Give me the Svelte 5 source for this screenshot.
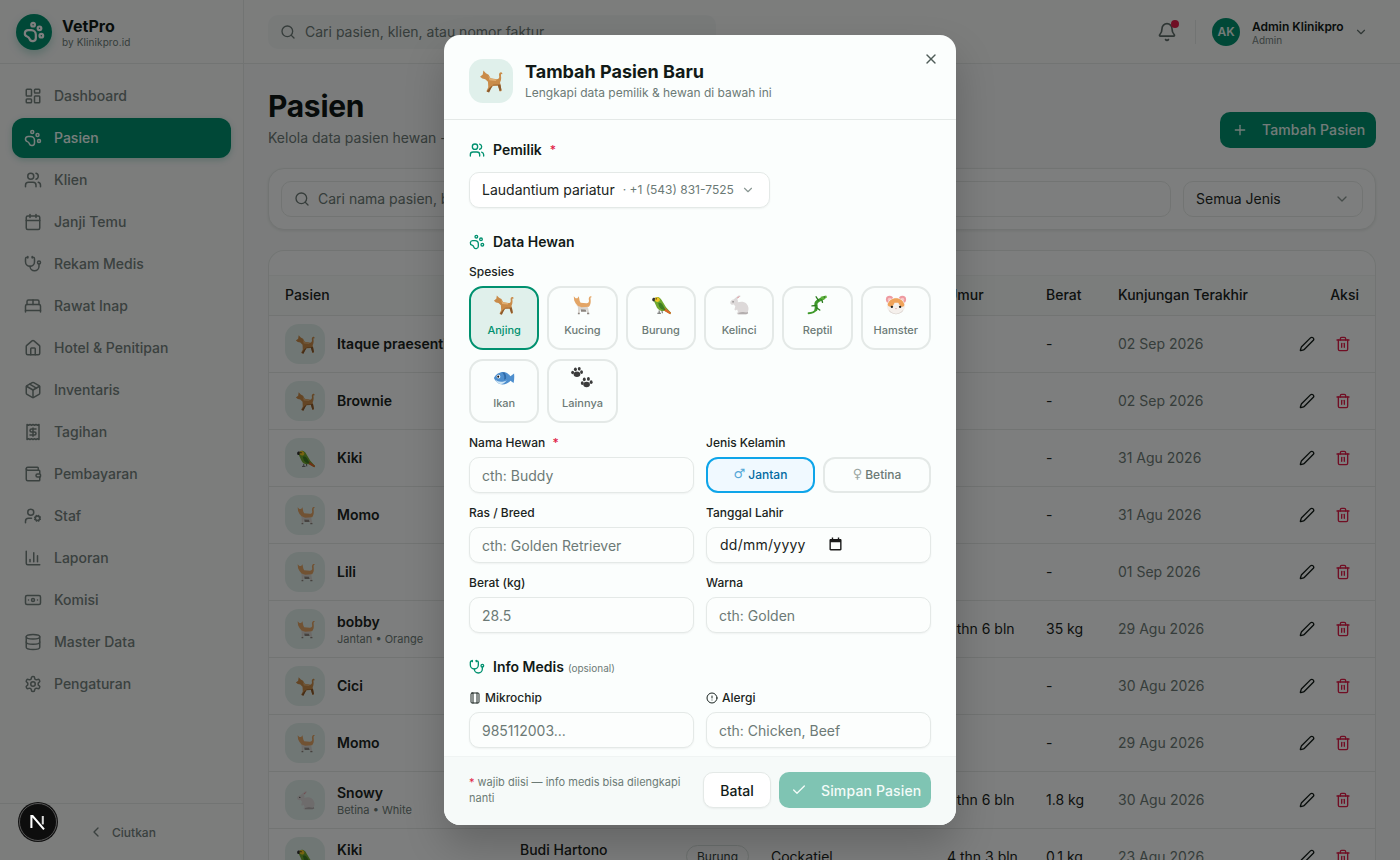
<script>
  const I = {
    dash: '<rect x="3" y="3" width="7" height="9" rx="1"/><rect x="14" y="3" width="7" height="5" rx="1"/><rect x="14" y="12" width="7" height="9" rx="1"/><rect x="3" y="16" width="7" height="5" rx="1"/>',
    paw: '<circle cx="11" cy="4" r="2"/><circle cx="18" cy="8" r="2"/><circle cx="20" cy="16" r="2"/><path d="M9 10a5 5 0 0 1 5 5v3.5a3.5 3.5 0 0 1-6.84 1.045Q6.52 17.48 4.46 16.84A3.5 3.5 0 0 1 5.5 10Z"/>',
    users: '<path d="M16 21v-2a4 4 0 0 0-4-4H6a4 4 0 0 0-4 4v2"/><circle cx="9" cy="7" r="4"/><path d="M22 21v-2a4 4 0 0 0-3-3.87"/><path d="M16 3.13a4 4 0 0 1 0 7.75"/>',
    cal: '<path d="M8 2v4"/><path d="M16 2v4"/><rect x="3" y="4" width="18" height="18" rx="2"/><path d="M3 10h18"/>',
    steth: '<path d="M11 2v2"/><path d="M5 2v2"/><path d="M5 3H4a2 2 0 0 0-2 2v4a6 6 0 0 0 12 0V5a2 2 0 0 0-2-2h-1"/><path d="M8 15a6 6 0 0 0 12 0v-3"/><circle cx="20" cy="10" r="2"/>',
    bed: '<path d="M2 20v-8a2 2 0 0 1 2-2h16a2 2 0 0 1 2 2v8"/><path d="M4 10V6a2 2 0 0 1 2-2h12a2 2 0 0 1 2 2v4"/><path d="M12 4v6"/><path d="M2 18h20"/>',
    home: '<path d="M15 21v-8a1 1 0 0 0-1-1h-4a1 1 0 0 0-1 1v8"/><path d="M3 10a2 2 0 0 1 .709-1.528l7-5.999a2 2 0 0 1 2.582 0l7 5.999A2 2 0 0 1 21 10v9a2 2 0 0 1-2 2H5a2 2 0 0 1-2-2z"/>',
    pkg: '<path d="M11 21.73a2 2 0 0 0 2 0l7-4A2 2 0 0 0 21 16V8a2 2 0 0 0-1-1.73l-7-4a2 2 0 0 0-2 0l-7 4A2 2 0 0 0 3 8v8a2 2 0 0 0 1 1.73z"/><path d="M12 22V12"/><path d="M3.3 7 12 12l8.7-5"/><path d="m7.5 4.27 9 5.15"/>',
    receipt: '<path d="M4 2v20l2-1 2 1 2-1 2 1 2-1 2 1 2-1 2 1V2l-2 1-2-1-2 1-2-1-2 1-2-1-2 1Z"/><path d="M16 8h-6a2 2 0 1 0 0 4h4a2 2 0 1 1 0 4H8"/><path d="M12 17.5v-11"/>',
    wallet: '<path d="M19 7V4a1 1 0 0 0-1-1H5a2 2 0 0 0 0 4h15a1 1 0 0 1 1 1v4h-3a2 2 0 0 0 0 4h3a1 1 0 0 0 1-1v-2a1 1 0 0 0-1-1"/><path d="M3 5v14a2 2 0 0 0 2 2h15a1 1 0 0 0 1-1v-4"/>',
    cog: '<circle cx="18" cy="15" r="3"/><circle cx="9" cy="7" r="4"/><path d="M10 15H6a4 4 0 0 0-4 4v2"/><path d="m21.7 16.4-.9-.3"/><path d="m15.2 13.9-.9-.3"/><path d="m16.6 18.7.3-.9"/><path d="m19.1 12.2.3-.9"/><path d="m19.6 18.7-.4-1"/><path d="m16.8 12.3-.4-1"/><path d="m14.3 16.6 1-.4"/><path d="m20.7 13.8 1-.4"/>',
    chart: '<path d="M3 3v16a2 2 0 0 0 2 2h16"/><path d="M18 17V9"/><path d="M13 17V5"/><path d="M8 17v-3"/>',
    note: '<rect x="2" y="6" width="20" height="12" rx="2"/><circle cx="12" cy="12" r="2"/><path d="M6 12h.01M18 12h.01"/>',
    db: '<ellipse cx="12" cy="5" rx="9" ry="3"/><path d="M3 5V19A9 3 0 0 0 21 19V5"/><path d="M3 12A9 3 0 0 0 21 12"/>',
    gear: '<path d="M12.22 2h-.44a2 2 0 0 0-2 2v.18a2 2 0 0 1-1 1.73l-.43.25a2 2 0 0 1-2 0l-.15-.08a2 2 0 0 0-2.73.73l-.22.38a2 2 0 0 0 .73 2.73l.15.1a2 2 0 0 1 1 1.72v.51a2 2 0 0 1-1 1.74l-.15.09a2 2 0 0 0-.73 2.73l.22.38a2 2 0 0 0 2.73.73l.15-.08a2 2 0 0 1 2 0l.43.25a2 2 0 0 1 1 1.73V20a2 2 0 0 0 2 2h.44a2 2 0 0 0 2-2v-.18a2 2 0 0 1 1-1.73l.43-.25a2 2 0 0 1 2 0l.15.08a2 2 0 0 0 2.73-.73l.22-.39a2 2 0 0 0-.73-2.73l-.15-.08a2 2 0 0 1-1-1.74v-.5a2 2 0 0 1 1-1.74l.15-.09a2 2 0 0 0 .73-2.73l-.22-.38a2 2 0 0 0-2.73-.73l-.15.08a2 2 0 0 1-2 0l-.43-.25a2 2 0 0 1-1-1.73V4a2 2 0 0 0-2-2z"/><circle cx="12" cy="12" r="3"/>',
    bell: '<path d="M10.268 21a2 2 0 0 0 3.464 0"/><path d="M3.262 15.326A1 1 0 0 0 4 17h16a1 1 0 0 0 .74-1.673C19.41 13.956 18 12.499 18 8A6 6 0 0 0 6 8c0 4.499-1.411 5.956-2.738 7.326"/>',
    search: '<path d="m21 21-4.34-4.34"/><circle cx="11" cy="11" r="8"/>',
    down: '<path d="m6 9 6 6 6-6"/>',
    left: '<path d="m15 18-6-6 6-6"/>',
    plus: '<path d="M5 12h14"/><path d="M12 5v14"/>',
    x: '<path d="M18 6 6 18"/><path d="m6 6 12 12"/>',
    check: '<path d="M20 6 9 17l-5-5"/>',
    pen: '<path d="M21.174 6.812a1 1 0 0 0-3.986-3.987L3.842 16.174a2 2 0 0 0-.5.83l-1.321 4.352a.5.5 0 0 0 .623.622l4.353-1.32a2 2 0 0 0 .83-.497z"/>',
    trash: '<path d="M3 6h18"/><path d="M19 6v14c0 1-1 2-2 2H7c-1 0-2-1-2-2V6"/><path d="M8 6V4c0-1 1-2 2-2h4c1 0 2 1 2 2v2"/><path d="M10 11v6"/><path d="M14 11v6"/>',
    chip: '<rect x="4" y="2" width="16" height="20" rx="2"/><path d="M8 2v20M16 2v20"/>',
    alert: '<circle cx="12" cy="12" r="10"/><path d="M12 8v4"/><path d="M12 16h.01"/>'
  };

  const E = {
    dog: { label: '🐕', art: '<path fill="#c98b49" d="M4.2 1.5 6.6 4l2.6 1.4 1.9 3.5 6 1c1.4.1 2.3-1 2.3-2.4 0-1.2-.6-2.3.3-3.6 1.2-1.3 3-.6 2.7 1.2-.9-.5-1.4 0-1.3 1.3.4 2.6.1 4.6-.9 6.4l1.5 8.2-1.8.6-1.7-5.6-4.8.2-2.7 3.5-1.3 2.6-2.3-.9 1.8-3.8-.3-5.4L6 9.8l-2.8-.6L1 7.4l2.6-2.1z"/><path fill="#8c5a2c" d="m13 15.7 5.1-.2 1.7 5.6 1.8-.6-1-5.7-7 .3-3.4 3-2.8 3.6 2.3.8 1.3-2.6z"/><path fill="#e0ae72" d="M9 6.5 11 9l6 1-1 1.5-6-.7z"/>' },
    cat: { label: '🐈', art: '<path fill="#d9d5d0" d="M4.5 9.5c1 2 2 3.5 3 4.5l.3 7.5h1.500l.7-5 6.5.5 1.500 4.500h1.800l-1-6-1.300-2.500-7 1-4-1.500z"/><path fill="#8c857f" d="M10.500 16.500 16 16.800l.8 2.500h-5.800zM7.500 20.500h2v1.500h-2zM17.500 20.500h2.400v1.500h-2.400z"/><path fill="#e3a566" d="M3 2.500 5 4.500h2l1.500-2 1 5 1 2 6.500.5c1.800 0 2.800-1 2.600-2.800-.2-1.500-.6-3 .6-4.300.8-.9 2.300-.7 2.400.6-1-.2-1.500.4-1.300 1.800.4 3 .3 5.300-.8 7.200l-1 1.500-8 .5-4-1.500-2.500-3-1.500-3z"/>' },
    bird: { label: '🦜', art: '<path fill="#6fa82f" d="M4 7c.5-3 3-4.500 5.500-3.500 2 .8 3 2.500 4 4.500l4 6.500 5.500 6-1 1.500-6-3.500-3.500 0c-3-.5-5-3-6-6z"/><path fill="#f3c623" d="M4.500 5.500C6 3 8.500 3 10 4.500c1 1 1 3-.5 3.800-1.800.9-3.700.2-5-2.800z"/><path fill="#e0622a" d="m16 15 7 5.500-1 1.500-6-3.500-1-3z"/><path fill="#3f7d22" d="M9 10c2-1 4 0 5.500 3l2.500 4.500c-3 .3-5.500-1-7-3.500z"/><path fill="#333" d="M2.500 5.500C3 4 4.500 3.700 5.500 4.500L5 8C3.500 8.500 2 7.500 2.500 5.500z"/><circle cx="6.800" cy="5.300" r=".8" fill="#222"/><path fill="none" stroke="#555" stroke-width="1" d="M10 18v3m-2 0h4m1-3 .5 3"/>' },
    rab: { label: '🐇', art: '<path fill="#ddd9d9" d="M2.500 9.500c0-2 1.500-3.500 3.500-3.500L11 2c1-.8 2.800-.6 3 .4-.8.200-2.500 1.600-4 3.100.8 1 1 2.300.7 3.500 3-1 7-1 9.500 1.500 2.500 2.600 2.800 6.500 1.300 9L22 21l-2 1H10l-.5-1.500L11 20l-1-3-2 1-1-1 1-3.500-1.500-2C4.500 12 2.500 11.500 2.500 9.500z"/><path fill="#e49aa0" d="M10 4c.8-.8 2-1.500 3-1.500-.8.800-1.700 1.800-2.500 2.500z"/><path fill="#b3aeae" d="M14 20c2-.5 4-.5 6 .3l1.300-1 .7 1.700-2 1H11l.5-1.500z"/><circle cx="5.500" cy="8.500" r=".7" fill="#444"/>' },
    liz: { label: '🦎', art: '<path fill="none" stroke="#3f9a2b" stroke-width="3.400" stroke-linecap="round" d="M19 4.500 14 7c-2 1-3.500 2-3.200 4.500.2 2 1 3.500 0 5.500"/><path fill="none" stroke="#3f9a2b" stroke-width="2" stroke-linecap="round" d="M10.800 17c-1.200 2.400-4 3.700-8 4"/><path fill="none" stroke="#2d7c20" stroke-width="1.500" stroke-linecap="round" d="M13.500 7 11 3m6 2.500 1 3.500M11 12.500l-4.500.5M11.500 15l3.500 2.500"/><path fill="#5db33a" d="m16 3 6-1.500 1 2-4 3-3-1z"/><circle cx="20" cy="3.300" r=".6" fill="#123"/>' },
    ham: { label: '🐹', art: '<circle cx="5" cy="6" r="4" fill="#ee9aa0"/><circle cx="19" cy="6" r="4" fill="#ee9aa0"/><circle cx="5" cy="6" r="2" fill="#f9c6c6"/><circle cx="19" cy="6" r="2" fill="#f9c6c6"/><ellipse cx="12" cy="13" rx="10" ry="9" fill="#f5f0ec"/><path fill="#f0a35a" d="M3 11c1-4 5-6.500 9-6.500S20 7 21 11c.3 1.500-.5 3-2 3-2 0-3.500-2-4.500-4.500h-4C9.500 12 8 14 6 14c-2 0-3.300-1.500-3-3z"/><circle cx="7.500" cy="14" r="1.300" fill="#222"/><circle cx="16.500" cy="14" r="1.300" fill="#222"/><path fill="#d98a8a" d="M11 15.500h2l-1 1.200z"/><path fill="#d8d2cd" d="M4 17c2 3 5 4.500 8 4.500s6-1.500 8-4.500c-.5 3-4 5-8 5s-7.500-2-8-5z"/>' },
    fish: { label: '🐟', art: '<path fill="#4e8fce" d="M1 12c2-4 6-6.500 10-6.500 3.500 0 6 2 8 4.500l4-3c.3 3 .3 7-.5 10.500L19 15c-2 2.500-5 4-8.500 4C6.500 19 3 16.500 1 12z"/><path fill="#cfe6f5" d="M2.500 14c3 2.500 8 3 12.500.5-2 3-4.500 4.500-7 4-2.500-.3-4.500-2.300-5.500-4.500z"/><path fill="#2f6aa8" d="M10 6c2 2 3 5 2 8l2-1c1-2 0-5-1.500-7z"/><circle cx="6" cy="10.500" r="2" fill="#fff"/><circle cx="5.700" cy="10.500" r="1.100" fill="#111"/>' },
    paws: { label: '🐾', art: '<g fill="#3b3b3b"><ellipse cx="6.500" cy="8" rx="3.600" ry="3"/><ellipse cx="1.800" cy="6" rx="1.600" ry="2"/><ellipse cx="4.800" cy="2.500" rx="1.600" ry="2"/><ellipse cx="9" cy="2" rx="1.600" ry="2"/><ellipse cx="11.500" cy="5.500" rx="1.600" ry="2"/><ellipse cx="17" cy="19" rx="3.600" ry="3"/><ellipse cx="12.300" cy="17.500" rx="1.600" ry="2"/><ellipse cx="14.500" cy="13.500" rx="1.600" ry="2"/><ellipse cx="19" cy="13" rx="1.600" ry="2"/><ellipse cx="22" cy="16.500" rx="1.600" ry="2"/></g>' }
  };

  const nav = [
    ['dash', 'Dashboard'], ['paw', 'Pasien'], ['users', 'Klien'], ['cal', 'Janji Temu'],
    ['steth', 'Rekam Medis'], ['bed', 'Rawat Inap'], ['home', 'Hotel & Penitipan'], ['pkg', 'Inventaris'],
    ['receipt', 'Tagihan'], ['wallet', 'Pembayaran'], ['cog', 'Staf'], ['chart', 'Laporan'],
    ['note', 'Komisi'], ['db', 'Master Data'], ['gear', 'Pengaturan']
  ];

  const rows = [
    { e: 'dog', n: 'Itaque praesentium', s: '', k: 'Laudantium pariatur', j: 'Anjing', r: '-', u: '', b: '-', v: '02 Sep 2026' },
    { e: 'dog', n: 'Brownie', s: '', k: 'Budi Hartono', j: 'Anjing', r: '-', u: '', b: '-', v: '02 Sep 2026' },
    { e: 'bird', n: 'Kiki', s: '', k: 'Budi Hartono', j: 'Burung', r: '-', u: '', b: '-', v: '31 Agu 2026' },
    { e: 'cat', n: 'Momo', s: '', k: 'Budi Hartono', j: 'Kucing', r: '-', u: '', b: '-', v: '31 Agu 2026' },
    { e: 'cat', n: 'Lili', s: '', k: 'Budi Hartono', j: 'Kucing', r: '-', u: '', b: '-', v: '01 Sep 2026' },
    { e: 'cat', n: 'bobby', s: 'Jantan • Orange', k: 'Budi Hartono', j: 'Kucing', r: 'Persia', u: '1 thn 6 bln', b: '35 kg', v: '29 Agu 2026' },
    { e: 'dog', n: 'Cici', s: '', k: 'Budi Hartono', j: 'Anjing', r: '-', u: '', b: '-', v: '30 Agu 2026' },
    { e: 'cat', n: 'Momo', s: '', k: 'Budi Hartono', j: 'Kucing', r: '-', u: '', b: '-', v: '29 Agu 2026' },
    { e: 'rab', n: 'Snowy', s: 'Betina • White', k: 'Budi Hartono', j: 'Kelinci', r: 'Anggora', u: '1 thn 6 bln', b: '1.8 kg', v: '30 Agu 2026' },
    { e: 'bird', n: 'Kiki', s: 'Jantan • Hijau', k: 'Budi Hartono', j: 'Burung', r: 'Cockatiel', u: '4 thn 3 bln', b: '0.1 kg', v: '23 Agu 2026' }
  ];

  const species = [
    ['dog', 'Anjing'], ['cat', 'Kucing'], ['bird', 'Burung'], ['rab', 'Kelinci'],
    ['liz', 'Reptil'], ['ham', 'Hamster'], ['fish', 'Ikan'], ['paws', 'Lainnya']
  ];
</script>

{#snippet icon(name, size, sw = 2)}
  <svg class="ic" width={size} height={size} viewBox="0 0 24 24" fill="none" stroke="currentColor" stroke-width={sw} stroke-linecap="round" stroke-linejoin="round">{@html I[name]}</svg>
{/snippet}

{#snippet emoji(name, size)}
  <svg class="ic" role="img" aria-label={E[name].label} width={size} height={size} viewBox="0 0 24 24">{@html E[name].art}</svg>
{/snippet}

<div class="app">
  <aside class="side">
    <div class="brand">
      <div class="logo">{@render icon('paw', 22, 2.4)}</div>
      <div>
        <div class="bname">VetPro</div>
        <div class="bsub">by Klinikpro.id</div>
      </div>
    </div>
    <nav class="nav">
      {#each nav as [ic, label], i}
        <div class="nitem" class:on={i === 1}>{@render icon(ic, 18)}<span>{label}</span></div>
      {/each}
    </nav>
    <div class="collapse">{@render icon('left', 16)}<span>Ciutkan</span></div>
  </aside>

  <div class="main">
    <header class="top">
      <div class="tsearch">{@render icon('search', 16)}<span>Cari pasien, klien, atau nomor faktur...</span></div>
      <div class="tright">
        <div class="bell">{@render icon('bell', 20)}<i></i></div>
        <div class="vsep"></div>
        <div class="av">AK</div>
        <div class="who"><b>Admin Klinikpro</b><small>Admin</small></div>
        <span class="chev">{@render icon('down', 14)}</span>
      </div>
    </header>

    <main class="content">
      <div class="phead">
        <div>
          <h1>Pasien</h1>
          <p>Kelola data pasien hewan - semua pasien klinik Anda</p>
        </div>
        <button class="add">{@render icon('plus', 16)}<span>Tambah Pasien</span></button>
      </div>

      <div class="filter">
        <div class="fsearch">{@render icon('search', 16)}<span>Cari nama pasien, breed, atau pemilik...</span></div>
        <div class="fsel"><span>Semua Jenis</span>{@render icon('down', 16)}</div>
      </div>

      <div class="tcard">
        <table>
          <colgroup>
            <col class="c1" /><col class="c2" /><col class="c3" /><col class="c4" />
            <col class="c5" /><col class="c6" /><col class="c7" /><col />
          </colgroup>
          <thead>
            <tr><th>Pasien</th><th>Klien</th><th>Jenis</th><th>Ras</th><th>Umur</th><th>Berat</th><th>Kunjungan Terakhir</th><th class="ra">Aksi</th></tr>
          </thead>
          <tbody>
            {#each rows as r}
              <tr>
                <td class="nb">
                  <div class="pcell">
                    <div class="pav">{@render emoji(r.e, 21)}</div>
                    <div class="pname" class:sub={r.s}><b>{r.n}</b>{#if r.s}<small>{r.s}</small>{/if}</div>
                  </div>
                </td>
                <td class="nb"><div class="kl"><b>{r.k}</b><small>+62 812 0000 000</small></div></td>
                <td><span class="pill">{r.j}</span></td>
                <td>{r.r}</td>
                <td>{r.u}</td>
                <td>{r.b}</td>
                <td class="date">{r.v}</td>
                <td class="nb">
                  <div class="acts">
                    <span class="pen">{@render icon('pen', 16)}</span>
                    <span class="del">{@render icon('trash', 16)}</span>
                  </div>
                </td>
              </tr>
            {/each}
          </tbody>
        </table>
      </div>
    </main>
  </div>

  <div class="overlay">
    <section class="modal">
      <div class="mhead">
        <div class="micon">{@render emoji('dog', 25)}</div>
        <div class="mtitle">
          <h2>Tambah Pasien Baru</h2>
          <p>Lengkapi data pemilik &amp; hewan di bawah ini</p>
        </div>
        <span class="mclose">{@render icon('x', 16)}</span>
      </div>

      <div class="mbody">
        <div class="sec sec-first">{@render icon('users', 16)}<span>Pemilik</span><em>*</em></div>
        <div class="owner">
          <span class="oname">Laudantium pariatur</span>
          <span class="ophone">· +1 (543) 831-7525</span>
          {@render icon('down', 14)}
        </div>

        <div class="sec sec-hewan">{@render icon('paw', 16)}<span>Data Hewan</span></div>
        <div class="lab">Spesies</div>
        <div class="spgrid">
          {#each species as [e, l], i}
            <div class="sp" class:sel={i === 0}><span class="spe">{@render emoji(e, 22)}</span><span class="spl">{l}</span></div>
          {/each}
        </div>

        <div class="fgrid">
          <div>
            <div class="lab">Nama Hewan <em>*</em></div>
            <div class="inp ph">cth: Buddy</div>
          </div>
          <div>
            <div class="lab">Jenis Kelamin</div>
            <div class="gender">
              <div class="g gsel"><span class="gi gi1">♂</span>Jantan</div>
              <div class="g"><span class="gi gi2">♀</span>Betina</div>
            </div>
          </div>
          <div>
            <div class="lab">Ras / Breed</div>
            <div class="inp ph">cth: Golden Retriever</div>
          </div>
          <div>
            <div class="lab">Tanggal Lahir</div>
            <div class="inp dt">
              <span>dd/mm/yyyy</span>
              <svg width="13" height="14" viewBox="0 0 14 14"><path fill="#1a1a1a" d="M3 0h1.5v1.5h5V0H11v1.5h1.2c.7 0 1.3.6 1.3 1.3v9.900c0 .7-.6 1.300-1.300 1.300H1.800c-.7 0-1.300-.6-1.300-1.300V2.800c0-.7.6-1.300 1.300-1.300H3zM2 5v7.500h10V5z"/></svg>
            </div>
          </div>
          <div>
            <div class="lab">Berat (kg)</div>
            <div class="inp ph">28.5</div>
          </div>
          <div>
            <div class="lab">Warna</div>
            <div class="inp ph">cth: Golden</div>
          </div>
        </div>

        <div class="sec sec-medis">{@render icon('steth', 16)}<span>Info Medis</span><small>(opsional)</small></div>
        <div class="fgrid">
          <div>
            <div class="lab ilab">{@render icon('chip', 12)}Mikrochip</div>
            <div class="inp ph">985112003...</div>
          </div>
          <div>
            <div class="lab ilab">{@render icon('alert', 12)}Alergi</div>
            <div class="inp ph">cth: Chicken, Beef</div>
          </div>
        </div>
      </div>

      <div class="mfoot">
        <div class="fnote"><em>*</em> wajib diisi — info medis bisa dilengkapi nanti</div>
        <button class="cancel">Batal</button>
        <button class="save">{@render icon('check', 16)}<span>Simpan Pasien</span></button>
      </div>
    </section>
  </div>

  <div class="nextdev">
    <svg width="24" height="24" viewBox="0 0 20 20" fill="none">
      <path d="M4.5 15V5h1L15 16.200" stroke="#fff" stroke-width="1.700"/>
      <path d="M14 5v7" stroke="#d8d8d8" stroke-width="1.700"/>
    </svg>
  </div>
</div>

<style>
  :global(body) { margin: 0; background: #f6f9f8; }
  :global(*) { box-sizing: border-box; }
  .app {
    position: relative; display: flex; height: 860px; overflow: hidden;
    font-family: Inter, sans-serif; font-size: 14px; color: #111a17;
  }
  .ic { flex: none; display: block; }

  .side { width: 244px; flex: none; display: flex; flex-direction: column; border-right: 1px solid #e4e9e7; background: #f8faf9; }
  .brand { height: 64px; flex: none; display: flex; align-items: center; gap: 10px; padding: 0 16px; border-bottom: 1px solid #e4e9e7; }
  .logo { width: 36px; height: 36px; border-radius: 18px; background: #00916f; color: #fff; display: flex; align-items: center; justify-content: center; box-shadow: 0 4px 8px rgba(0,145,111,.25); }
  .bname { font-size: 16px; font-weight: 700; line-height: 20px; color: #111a17; }
  .bsub { font-size: 10px; line-height: 12px; letter-spacing: .1px; color: #6c7a76; font-weight: 400; }
  .nav { flex: 1; padding: 12px 12px 0; display: flex; flex-direction: column; gap: 2px; }
  .nitem { height: 40px; display: flex; align-items: center; gap: 12px; padding-left: 12px; border-radius: 12px; color: #75827e; font-weight: 500; font-size: 14px; }
  .nitem span { margin-bottom: 2px; }
  .nitem.on { background: #00916f; color: #f0fdf9; box-shadow: 0 2px 6px rgba(0,145,111,.25); width: 219px; }
  .collapse { height: 57px; flex: none; border-top: 1px solid #e4e9e7; display: flex; align-items: center; padding-left: 88px; gap: 8px; font-size: 12px; color: #75827e; font-weight: 500; }

  .main { flex: 1; min-width: 0; display: flex; flex-direction: column; }
  .top { height: 64px; flex: none; display: flex; align-items: center; justify-content: space-between; padding: 0 24px; border-bottom: 1px solid #e4e9e7; background: #f8faf9; }
  .tsearch { width: 448px; height: 34px; border-radius: 10px; background: #f0f4f3; display: flex; align-items: center; gap: 9px; padding-left: 12px; color: #6c7a76; }
  .tright { display: flex; align-items: center; }
  .bell { position: relative; color: #5f6d69; margin-right: 18px; }
  .bell i { position: absolute; top: -2px; right: -2px; width: 8px; height: 8px; border-radius: 50%; background: #e11d48; }
  .vsep { width: 1px; height: 24px; background: #e4e9e7; margin-right: 16px; }
  .av { width: 28px; height: 28px; border-radius: 50%; background: #00916f; color: #e6f7f2; font-size: 12px; font-weight: 600; display: flex; align-items: center; justify-content: center; margin-right: 12px; }
  .who { display: flex; flex-direction: column; width: 102px; padding-top: 2px; }
  .who b { font-size: 12px; line-height: 15px; font-weight: 600; color: #111a17; white-space: nowrap; }
  .who small { font-size: 10px; line-height: 12px; color: #75827e; }
  .chev { color: #5f6d69; margin-right: 8px; }

  .content { padding: 24px; flex: 1; display: flex; flex-direction: column; gap: 20px; min-height: 0; }
  .phead { display: flex; justify-content: space-between; align-items: flex-end; }
  h1 { margin: 0; font-size: 30px; line-height: 36px; font-weight: 700; letter-spacing: -.3px; color: #0f1714; }
  .phead p { margin: 4px 0 0; font-size: 14px; line-height: 20px; color: #6c7a76; }
  .add { width: 156px; height: 36px; border: 0; border-radius: 10px; background: #00916f; color: #e6f7f2; display: flex; align-items: center; gap: 14px; padding: 0 12px 1px; font: 500 14px Inter, sans-serif; letter-spacing: .1px; white-space: nowrap; }

  .filter { height: 62px; flex: none; display: flex; gap: 12px; padding: 12px; border: 1px solid #e4e9e7; border-radius: 16px; background: #fbfdfc; box-shadow: 0 1px 3px rgba(0,0,0,.08); }
  .fsearch { flex: 1; display: flex; align-items: center; gap: 8px; padding: 0 0 1px 12px; border: 1px solid #e4e9e7; border-radius: 10px; color: #6c7a76; }
  .fsel { width: 180px; flex: none; display: flex; align-items: center; justify-content: space-between; padding: 0 12px 1px; border: 1px solid #e4e9e7; border-radius: 10px; color: #1f2a27; }
  .fsel .ic { color: #8b9894; }

  .tcard { flex: none; padding-top: 24px; border: 1px solid #e4e9e7; border-bottom: 0; border-radius: 16px 16px 0 0; background: #fbfdfc; width: 1108px; }
  table { width: 1106px; table-layout: fixed; border-collapse: separate; border-spacing: 0; font-size: 14px; }
  .c1 { width: 235px; } .c2 { width: 166px; } .c3 { width: 85px; } .c4 { width: 176px; }
  .c5 { width: 99px; } .c6 { width: 72px; } .c7 { width: 188px; }
  th { height: 41px; text-align: left; font-weight: 500; padding: 0 0 2px 16px; background: #f7faf9; border-top: 1px solid #eef2f0; border-bottom: 1px solid #e4e9e7; color: #1a2421; white-space: nowrap; }
  th.ra { text-align: right; padding: 0 16px 2px 0; }
  td { height: 57px; padding: 0 0 2px 16px; border-bottom: 1px solid #e4e9e7; color: #1a2421; white-space: nowrap; }
  td.nb { padding-bottom: 0; }
  td.date { color: #6c7a76; }
  .pcell { display: flex; align-items: center; gap: 12px; }
  .pav { width: 40px; height: 40px; flex: none; border-radius: 14px; background: #e0efeb; display: flex; align-items: center; justify-content: center; }
  .pname, .kl { display: flex; flex-direction: column; }
  .pname { margin-bottom: 2px; }
  .pname.sub { margin-bottom: 0; }
  .pname b, .kl b { font-weight: 600; font-size: 14px; line-height: 17px; }
  .kl b { font-weight: 500; }
  .pname small, .kl small { font-size: 11px; line-height: 14px; margin-top: 2px; color: #6c7a76; }
  .pill { display: inline-block; padding: 2px 10px; border: 1px solid #d9e1de; border-radius: 12px; font-size: 12px; line-height: 17px; color: #33413d; }
  .acts { display: flex; justify-content: flex-end; align-items: center; gap: 20px; padding-right: 24px; }
  .pen { color: #111a17; }
  .del { color: #e11d48; }

  .overlay { position: absolute; inset: 0; background: rgba(0,0,0,.5); display: flex; align-items: center; justify-content: center; z-index: 10; }
  .modal { width: 512px; height: 790px; border-radius: 16px; background: #fbfefd; display: flex; flex-direction: column; overflow: hidden; box-shadow: 0 20px 40px rgba(0,0,0,.2); }
  .mhead { position: relative; flex: none; height: 85px; display: flex; align-items: flex-start; gap: 12px; padding: 24px 24px 0 25px; border-bottom: 1px solid #e4e9e7; }
  .micon { width: 44px; height: 44px; flex: none; border-radius: 14px; background: #e0f0eb; display: flex; align-items: center; justify-content: center; }
  .mtitle { padding-top: 1px; }
  h2 { margin: 0; font-size: 18px; line-height: 24px; font-weight: 700; color: #111a17; }
  .mtitle p { margin: 1px 0 0; font-size: 12px; line-height: 16px; color: #6c7a76; }
  .mclose { position: absolute; top: 16px; right: 17px; color: #4f5c58; }
  .mbody { flex: 1; min-height: 0; overflow: hidden; padding: 19px 25px 0 25px; }
  .sec { display: flex; align-items: center; gap: 8px; height: 21px; margin-bottom: 12px; font-size: 14px; font-weight: 600; color: #111a17; }
  .sec .ic { color: #00916f; }
  .sec em { font-style: normal; color: #e11d48; font-size: 12px; font-weight: 500; }
  .sec small { font-size: 10px; font-weight: 400; color: #6c7a76; margin-left: -4px; padding-top: 2px; }
  .sec-hewan { margin-top: 23px; }
  .sec-medis { margin-top: 23px; margin-bottom: 13px; }
  .owner { width: 301px; height: 36px; display: flex; align-items: center; padding: 0 12px 1px; border: 1px solid #e4e9e7; border-radius: 10px; background: #fff; box-shadow: 0 1px 2px rgba(0,0,0,.05); }
  .oname { font-size: 14px; color: #1a2421; white-space: nowrap; }
  .ophone { font-size: 12px; color: #6c7a76; margin-left: 8px; white-space: nowrap; }
  .owner .ic { color: #8b9894; margin-left: auto; margin-right: 2px; }
  .lab { font-size: 12px; line-height: 16px; font-weight: 500; color: #1a2421; margin-bottom: 6px; }
  .lab em { font-style: normal; color: #e11d48; margin-left: 4px; }
  .ilab { display: flex; align-items: center; gap: 4px; }
  .spgrid { display: grid; grid-template-columns: repeat(6, 1fr); column-gap: 8px; row-gap: 9px; margin-bottom: 12px; width: 462px; }
  .sp { height: 64px; border: 2px solid #e4e9e7; border-radius: 14px; display: flex; flex-direction: column; align-items: center; padding-top: 6px; }
  .sp.sel { border-color: #00916f; background: #e0f0eb; }
  .spe { height: 26px; display: block; }
  .spl { font-size: 11px; line-height: 16px; font-weight: 500; color: #6c7a76; margin-top: 2px; }
  .sp.sel .spl { color: #00916f; }
  .fgrid { display: grid; grid-template-columns: 225px 225px; column-gap: 12px; row-gap: 12px; width: 462px; }
  .inp { height: 36px; display: flex; align-items: center; padding: 0 12px; border: 1px solid #e4e9e7; border-radius: 10px; background: #fcfefd; box-shadow: 0 1px 2px rgba(0,0,0,.05); font-size: 14px; }
  .ph { color: #6c7a76; }
  .dt { color: #1a2421; padding-left: 13px; letter-spacing: .25px; padding-bottom: 2px; }
  .dt svg { margin-left: 23px; }
  .gender { display: grid; grid-template-columns: 109px 108px; gap: 8px; }
  .g { height: 36px; display: flex; align-items: center; justify-content: center; gap: 3px; padding-bottom: 2px; border: 2px solid #e4e9e7; border-radius: 12px; font-size: 12px; font-weight: 500; color: #6c7a76; }
  .gi { font-family: "DejaVu Sans", sans-serif; font-size: 13px; font-weight: 400; line-height: 16px; }
  .gi2 { color: #9aa6a2; }
  .gi1 { color: #56a8d8; }
  .gsel { border-color: #0ea5e9; background: #f0f9ff; color: #0369a1; }
  .mfoot { flex: none; height: 69px; display: flex; align-items: center; gap: 8px; padding: 0 25px 2px; background: #f6faf9; border-top: 1px solid #f0f4f3; }
  .fnote { flex: 1; font-size: 11px; line-height: 16px; color: #6c7a76; padding-right: 10px; }
  .fnote em { font-style: normal; color: #e11d48; }
  .cancel { width: 68px; height: 36px; border: 1px solid #e4e9e7; border-radius: 10px; background: #fff; font: 500 14px Inter, sans-serif; color: #111a17; box-shadow: 0 1px 2px rgba(0,0,0,.05); }
  .save { width: 152px; height: 36px; border: 0; border-radius: 10px; background: #7fc4b3; color: #f3fbf8; display: flex; align-items: center; gap: 14px; padding: 0 12px; font: 500 14px Inter, sans-serif; letter-spacing: .15px; white-space: nowrap; }

  .nextdev { position: absolute; left: 19px; top: 803px; width: 38px; height: 38px; border-radius: 50%; background: #0d0d0d; border: 1px solid #555; box-shadow: 0 0 0 1px #111; display: flex; align-items: center; justify-content: center; z-index: 20; }
</style>
